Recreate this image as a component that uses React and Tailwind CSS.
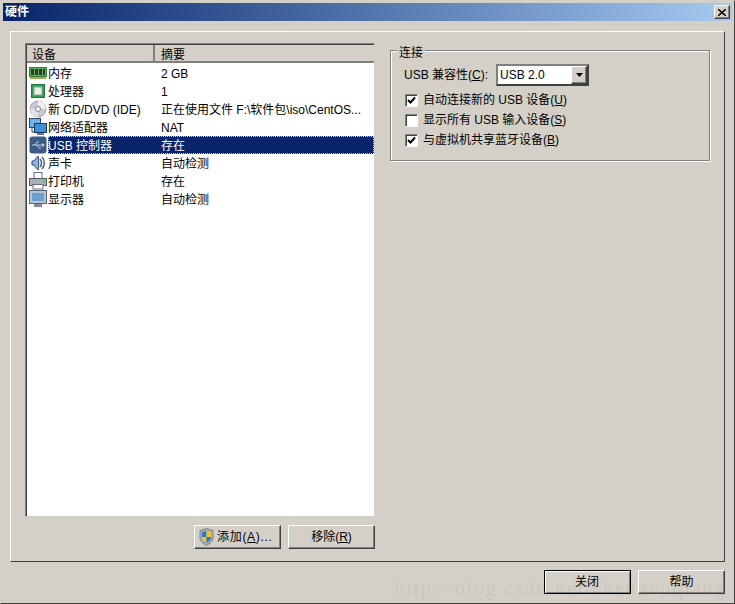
const F = '[font-family:"Liberation_Sans","Noto_Sans_CJK_SC",sans-serif]';

const Ram = () => (
  <svg width="18" height="16" viewBox="0 0 18 16"><rect x="0.500" y="2.500" width="17" height="9" fill="#5cae5c" stroke="#2f7d3a" /><rect x="2" y="4" width="3" height="6" fill="#2e3a2e" /><rect x="6" y="4" width="3" height="6" fill="#2e3a2e" /><rect x="10" y="4" width="3" height="6" fill="#2e3a2e" /><rect x="14" y="4" width="2" height="6" fill="#2e3a2e" /><rect x="1" y="12" width="16" height="2" fill="#b9a24a" /></svg>
);
const Cpu = () => (
  <svg width="16" height="16" viewBox="0 0 16 16"><rect x="1.500" y="1.500" width="13" height="13" fill="#2f9f55" stroke="#1c7a3a" /><rect x="4" y="4" width="8" height="8" fill="#ecece2" stroke="#8fa39a" /></svg>
);
const Disc = () => (
  <svg width="18" height="18" viewBox="0 0 18 18"><circle cx="9" cy="9" r="8" fill="#c9ccd2" stroke="#a2a4aa" /><path d="M9 1a8 8 0 0 1 8 8h-5a3 3 0 0 0-3-3z" fill="#eeeff2" /><path d="M9 17a8 8 0 0 1-8-8h5a3 3 0 0 0 3 3z" fill="#e2e3e8" /><circle cx="9" cy="9" r="2.500" fill="#fff" stroke="#85878d" /></svg>
);
const Net = () => (
  <svg width="18" height="18" viewBox="0 0 18 18"><rect x="0.500" y="0.500" width="11" height="9" fill="#6fb3e8" stroke="#26456a" /><path d="M3 10v4h3" fill="none" stroke="#26456a" /><rect x="5.500" y="5.500" width="12" height="9" fill="#3f8fd8" stroke="#1f3a5f" /><rect x="8" y="15" width="7" height="2" fill="#6a7686" /></svg>
);
const Usb = () => (
  <svg width="18" height="18" viewBox="0 0 18 18"><rect x="0.500" y="0.500" width="17" height="17" rx="3" fill="#3d5b88" /><path d="M3 9h10M6 9l2-3h2M8 9l2 3h2" fill="none" stroke="#bccbdf" /><path d="M13 7l3 2-3 2z" fill="#bccbdf" /></svg>
);
const Sound = () => (
  <svg width="18" height="18" viewBox="0 0 18 18"><path d="M3 7h2l4-5c1 3 1 11 0 14l-4-5H3z" fill="#8fb2dc" stroke="#2e4a78" /><path d="M11 5c2 2 2 6 0 8M13 3c3 3 3 9 0 12" fill="none" stroke="#34568e" strokeWidth="1.400" /></svg>
);
const Printer = () => (
  <svg width="18" height="18" viewBox="0 0 18 18"><rect x="5" y="0.500" width="8" height="6" fill="#fff" stroke="#6a6f7a" /><rect x="0.500" y="6.500" width="17" height="7" fill="#aab0bb" stroke="#545a66" /><rect x="4" y="12.500" width="10" height="4.500" fill="#fff" stroke="#6a6f7a" /><rect x="14" y="8" width="2" height="2" fill="#4c4" /></svg>
);
const Monitor = () => (
  <svg width="18" height="18" viewBox="0 0 18 18"><rect x="0.500" y="0.500" width="17" height="13" fill="#b6c5d4" stroke="#55677a" /><rect x="3" y="3" width="12" height="8" fill="#6d9fcf" /><rect x="5" y="14" width="8" height="3" fill="#7e8a96" /></svg>
);
const Shield = () => (
  <svg width="15" height="18" viewBox="0 0 15 18"><path d="M7.500 0.500l6.500 2v7c0 4-3 6-6.500 8-3.500-2-6.500-4-6.500-8v-7z" fill="#a4acb6" stroke="#7a828c" /><path d="M7.500 3v6H3V4.200z" fill="#2f78c8" /><path d="M7.500 3L12 4.200V9H7.500z" fill="#f2c71c" /><path d="M3 9h4.500v6C5 13.500 3 12 3 9z" fill="#f2c71c" /><path d="M7.500 9H12c0 3-2 4.500-4.500 6z" fill="#2f78c8" /></svg>
);

const rows = [
  [Ram, '内存', '2 GB'],
  [Cpu, '处理器', '1'],
  [Disc, '新 CD/DVD (IDE)', '正在使用文件 F:\\软件包\\iso\\CentOS...'],
  [Net, '网络适配器', 'NAT'],
  [Usb, 'USB 控制器', '存在', true],
  [Sound, '声卡', '自动检测'],
  [Printer, '打印机', '存在'],
  [Monitor, '显示器', '自动检测'],
];

const raised = 'border border-t-white border-l-white border-r-[#404040] border-b-[#404040] shadow-[inset_-1px_-1px_0_#808080]';

function Btn({ children, className = '' }) {
  return <button className={`h-6 w-[87px] flex items-center justify-center bg-[#d4d0c8] text-black ${raised} ${className}`}>{children}</button>;
}

function Check({ checked, label, u }) {
  return (
    <div className="h-5 flex items-center gap-[5px]">
      <span className="w-[13px] h-[13px] bg-white border border-t-[#808080] border-l-[#808080] border-r-white border-b-white shadow-[inset_1px_1px_0_#404040] flex items-center justify-center">
        {checked && <svg width="9" height="9" viewBox="0 0 9 9"><path d="M1 4l2.500 2.500L8 1.500" fill="none" stroke="#000" strokeWidth="2" /></svg>}
      </span>
      <span>{label}(<span className="underline">{u}</span>)</span>
    </div>
  );
}

export default function App() {
  return (
    <div className={`relative w-[735px] h-[604px] overflow-hidden bg-[#d4d0c8] border border-t-[#d4d0c8] border-l-[#d4d0c8] border-r-[#404040] border-b-[#404040] p-[2px] text-[12px] leading-[18px] text-black ${F}`}>
      <div className="h-[18px] flex items-center justify-between px-[2px] bg-gradient-to-r from-[#0a246a] to-[#a6caf0]">
        <span className="text-white font-bold">硬件</span>
        <span className={`w-4 h-[14px] flex items-center justify-center bg-[#d4d0c8] ${raised}`}>
          <svg width="8" height="7" viewBox="0 0 8 7"><path d="M0 0l8 7M8 0L0 7" stroke="#000" strokeWidth="1.500" /></svg>
        </span>
      </div>

      <div className="mt-[10px] mx-[7px] h-[531px] border border-t-white border-l-white border-r-[#404040] border-b-[#404040] pt-[11px] px-[14px] flex gap-[15px]">
        <div className="w-[350px] flex flex-col">
          <div className="h-[474px] bg-white border border-t-[#808080] border-l-[#808080] border-r-[#d4d0c8] border-b-[#d4d0c8] shadow-[inset_1px_1px_0_#404040] pl-px pt-px">
            <div className="h-[18px] flex bg-[#d4d0c8] border-b-2 border-[#808080]">
              <div className="w-[128px] pl-[5px] border-r-2 border-[#808080] leading-[21px]">设备</div>
              <div className="pl-[6px] leading-[21px]">摘要</div>
            </div>
            <div className="pt-[1px]">
              {rows.map(([Icon, a, b, sel]) => (
                <div key={a} className="h-[18px] flex items-center">
                  <span className="w-[21px] h-[18px] shrink-0 flex items-center justify-center"><Icon /></span>
                  <div className={`flex-1 h-[18px] flex leading-[20px] ${sel ? 'bg-[#0a246a] text-white outline-1 outline-dotted outline-offset-[-1px] outline-[#d4d0c8]' : ''}`}>
                    <span className="w-[113px] shrink-0 whitespace-pre">{a}</span>
                    <span className="whitespace-pre">{b}</span>
                  </div>
                </div>
              ))}
            </div>
          </div>
          <div className="mt-2 flex justify-end gap-[7px]">
            <Btn className="justify-start pl-[4px] gap-[3px]"><Shield /><span className="tracking-[0.7px]">添加(<span className="underline">A</span>)...</span></Btn>
            <Btn><span>移除(<span className="underline">R</span>)</span></Btn>
          </div>
        </div>

        <div className="relative mt-[7px] w-[320px] h-[111px] border border-[#808080] shadow-[1px_1px_0_#fff,inset_1px_1px_0_#fff] pl-[13px] pr-[14px] pt-[8px]">
          <span className="absolute -top-[7px] left-[6px] bg-[#d4d0c8] px-[2px]">连接</span>
          <div className="flex items-center gap-[8px] h-[22px] mt-[5px]">
            <span>USB 兼容性(<span className="underline">C</span>):</span>
            <div className="w-[93px] h-[22px] bg-white border-2 border-t-[#808080] border-l-[#808080] border-r-[#404040] border-b-[#404040] flex items-center justify-between pl-[2px]">
              <span>USB 2.0</span>
              <span className={`w-4 h-[18px] bg-[#d4d0c8] flex items-center justify-center ${raised}`}>
                <svg width="7" height="4" viewBox="0 0 7 4"><path d="M0 0h7L3.500 4z" fill="#000" /></svg>
              </span>
            </div>
          </div>
          <div className="mt-[4px] ml-px flex flex-col">
            <Check checked label="自动连接新的 USB 设备" u="U" />
            <Check label="显示所有 USB 输入设备" u="S" />
            <Check checked label="与虚拟机共享蓝牙设备" u="B" />
          </div>
        </div>
      </div>

      <div className="mt-2 mr-[7px] flex justify-end gap-[7px]">
        <button className="h-6 w-[87px] flex items-center justify-center bg-[#d4d0c8] text-black border border-black shadow-[inset_1px_1px_0_#fff,inset_-1px_-1px_0_#808080]"><span className="mr-[1px]">关闭</span></button>
        <Btn>帮助</Btn>
      </div>

      <span className='absolute right-[8px] bottom-[5px] text-[20px] leading-5 tracking-[1.800px] text-black/6 pointer-events-none [font-family:"Liberation_Serif",serif]'>http://blog.csdn.net/chengyuqiang</span>
    </div>
  );
}
